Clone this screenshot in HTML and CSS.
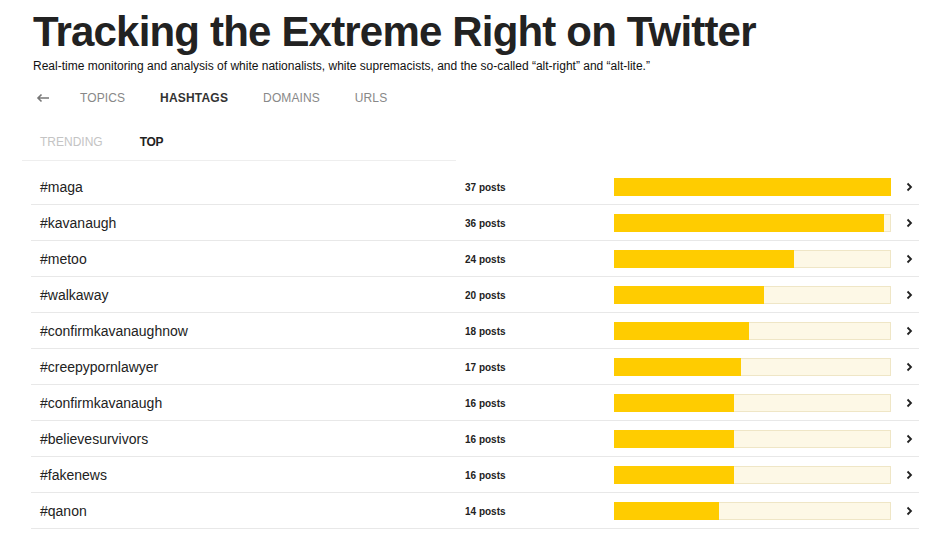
FILE: index.html
```html
<!DOCTYPE html>
<html lang="en">
<head>
    <meta charset="UTF-8">
    <meta name="viewport" content="width=device-width, initial-scale=1.0">
    <title>Tracking the Extreme Right on Twitter</title>
    <link rel="stylesheet" href="styles.css">
</head>
<body>
    <div class="page">
        <header class="header">
            <h1>Tracking the Extreme Right on Twitter</h1>
            <p class="lede">Real-time monitoring and analysis of white nationalists, white supremacists, and the so-called “alt-right” and “alt-lite.”</p>
        </header>

        <nav class="nav">
            <a class="back" href="#">
                <svg width="14" height="10" viewBox="0 0 14 10"><path d="M13 5H2M5.5 1.5L2 5l3.5 3.5" fill="none" stroke="#777" stroke-width="1.6"/></svg>
            </a>
            <a href="#">Topics</a>
            <a href="#" class="active">Hashtags</a>
            <a href="#">Domains</a>
            <a href="#">URLs</a>
        </nav>

        <div class="subtabs">
            <a href="#">Trending</a>
            <a href="#" class="active">Top</a>
        </div>

        <ul class="list" id="hashtag-list">
            <!-- rows are added from the data below -->
        </ul>
    </div>

    <script>
        const hashtags = [
            ['maga', 37], ['kavanaugh', 36], ['metoo', 24], ['walkaway', 20],
            ['confirmkavanaughnow', 18], ['creepypornlawyer', 17],
            ['confirmkavanaugh', 16], ['believesurvivors', 16],
            ['fakenews', 16], ['qanon', 14]
        ];
        const max = hashtags[0][1];
        const list = document.getElementById('hashtag-list');

        hashtags.forEach(([tag, count]) => {
            const row = document.createElement('li');
            row.className = 'row';
            row.innerHTML = `
                <span class="tag">#${tag}</span>
                <span class="count">${count} posts</span>
                <span class="bar"><span class="fill" style="width: ${(count / max * 100).toFixed(2)}%"></span></span>
                <span class="chevron">
                    <svg width="7" height="10" viewBox="0 0 7 10"><path d="M1.5 1.5L5 5l-3.5 3.5" fill="none" stroke="#222" stroke-width="1.8"/></svg>
                </span>
            `;
            list.appendChild(row);
        });
    </script>
</body>
</html>
```

FILE: styles.css
```css
/* Global Styles */
body {
    font-family: 'Liberation Sans', Arial, sans-serif;
    background-color: #ffffff;
    margin: 0;
    padding: 0;
    color: #222;
}

a {
    text-decoration: none;
    color: inherit;
}

.page {
    width: 898px;
    padding: 0 0 0 22px;
}

/* Header */
.header {
    padding: 8px 0 0 11px;
}

.header h1 {
    font-size: 42px;
    font-weight: bold;
    line-height: 48px;
    margin: 0;
    color: #222;
    letter-spacing: -0.82px;
}

.lede {
    font-size: 12px;
    margin: 3px 0 0;
    color: #111;
}

/* Main nav */
.nav {
    display: flex;
    align-items: center;
    gap: 35px;
    padding: 15px 0 0 14px;
    height: 20px;
}

.nav a {
    font-size: 12px;
    text-transform: uppercase;
    letter-spacing: 0.1px;
    color: #888;
}

.nav .back {
    display: flex;
    margin-right: -5px;
}

.nav a.active {
    font-weight: bold;
    color: #333;
    letter-spacing: 0.2px;
}

/* Sub tabs */
.subtabs {
    display: flex;
    gap: 37px;
    width: 416px;
    padding: 27px 0 11px 18px;
    border-bottom: 1px solid #eee;
}

.subtabs a {
    font-size: 12px;
    text-transform: uppercase;
    color: #c4c4c4;
}

.subtabs a.active {
    color: #222;
    font-weight: bold;
    letter-spacing: -0.3px;
}

/* Hashtag list */
.list {
    list-style: none;
    margin: 8px 0 0 9px;
    padding: 0;
    width: 888px;
}

.row {
    display: grid;
    grid-template-columns: 1fr 149px 277px 28px;
    align-items: center;
    height: 35px;
    padding-left: 9px;
    border-bottom: 1px solid #e8e8e8;
}

.tag {
    font-size: 14px;
    color: #222;
}

.count {
    font-size: 10px;
    font-weight: bold;
    color: #222;
    padding-top: 2px;
}

.bar {
    display: block;
    height: 18px;
    background-color: #fdf8e6;
    box-shadow: inset 0 0 0 1px #efe6c6;
    position: relative;
}

.fill {
    display: block;
    position: absolute;
    top: 0;
    left: 0;
    bottom: 0;
    background-color: #ffcc00;
}

.chevron {
    display: flex;
    justify-content: flex-end;
    padding-right: 6px;
}
```
